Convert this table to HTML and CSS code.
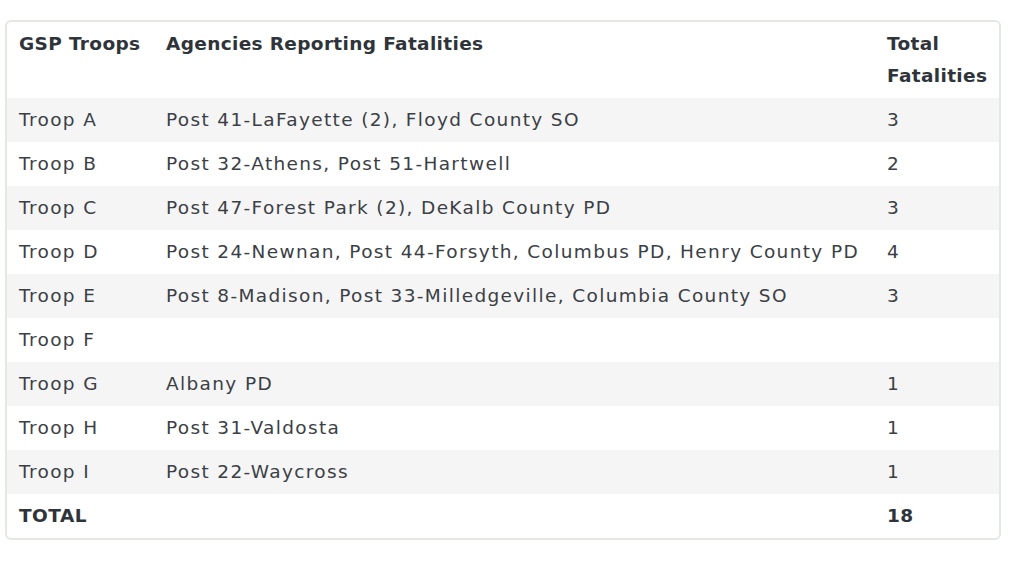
FILE: index.html
```html
<!DOCTYPE html>
<html>
<head>
<meta charset="utf-8">
<link rel="stylesheet" href="styles.css">
</head>
<body>
<div class="card">
<table class="fatal">
<colgroup><col class="c1"><col class="c2"><col class="c3"></colgroup>
<thead>
<tr><th>GSP Troops</th><th>Agencies Reporting Fatalities</th><th>Total Fatalities</th></tr>
</thead>
<tbody>
<tr><td>Troop A</td><td>Post 41-LaFayette (2), Floyd County SO</td><td>3</td></tr>
<tr><td>Troop B</td><td>Post 32-Athens, Post 51-Hartwell</td><td>2</td></tr>
<tr><td>Troop C</td><td>Post 47-Forest Park (2), DeKalb County PD</td><td>3</td></tr>
<tr><td>Troop D</td><td>Post 24-Newnan, Post 44-Forsyth, Columbus PD, Henry County PD</td><td>4</td></tr>
<tr><td>Troop E</td><td>Post 8-Madison, Post 33-Milledgeville, Columbia County SO</td><td>3</td></tr>
<tr><td>Troop F</td><td></td><td></td></tr>
<tr><td>Troop G</td><td>Albany PD</td><td>1</td></tr>
<tr><td>Troop H</td><td>Post 31-Valdosta</td><td>1</td></tr>
<tr><td>Troop I</td><td>Post 22-Waycross</td><td>1</td></tr>
<tr class="total"><td>TOTAL</td><td></td><td>18</td></tr>
</tbody>
</table>
</div>
</body>
</html>
```
FILE: styles.css
```css
html, body { margin: 0; padding: 0; background: #fff; }
body { padding: 20px 0 0 5px; }
.card {
  width: 996px;
  border: 2px solid #e2e9e3;
  border-radius: 6px;
  overflow: hidden;
  box-sizing: border-box;
}
.fatal {
  width: 100%;
  border-collapse: collapse;
  table-layout: fixed;
  font-family: "DejaVu Sans", sans-serif;
  font-size: 18.5px;
  letter-spacing: 1.35px;
  color: #3b4045;
}
.c1 { width: 147px; }
.c2 { width: 721px; }
.fatal th, .fatal td {
  text-align: left;
  padding: 6px 12px;
  line-height: 32px;
  vertical-align: top;
  white-space: nowrap;
}
.fatal th { font-weight: bold; color: #2e3439; white-space: normal; letter-spacing: 0.35px; }
.fatal tbody tr:nth-child(odd) { background: #f5f5f5; }
.fatal tr.total td { font-weight: bold; color: #2e3439; letter-spacing: 0.5px; }
```
